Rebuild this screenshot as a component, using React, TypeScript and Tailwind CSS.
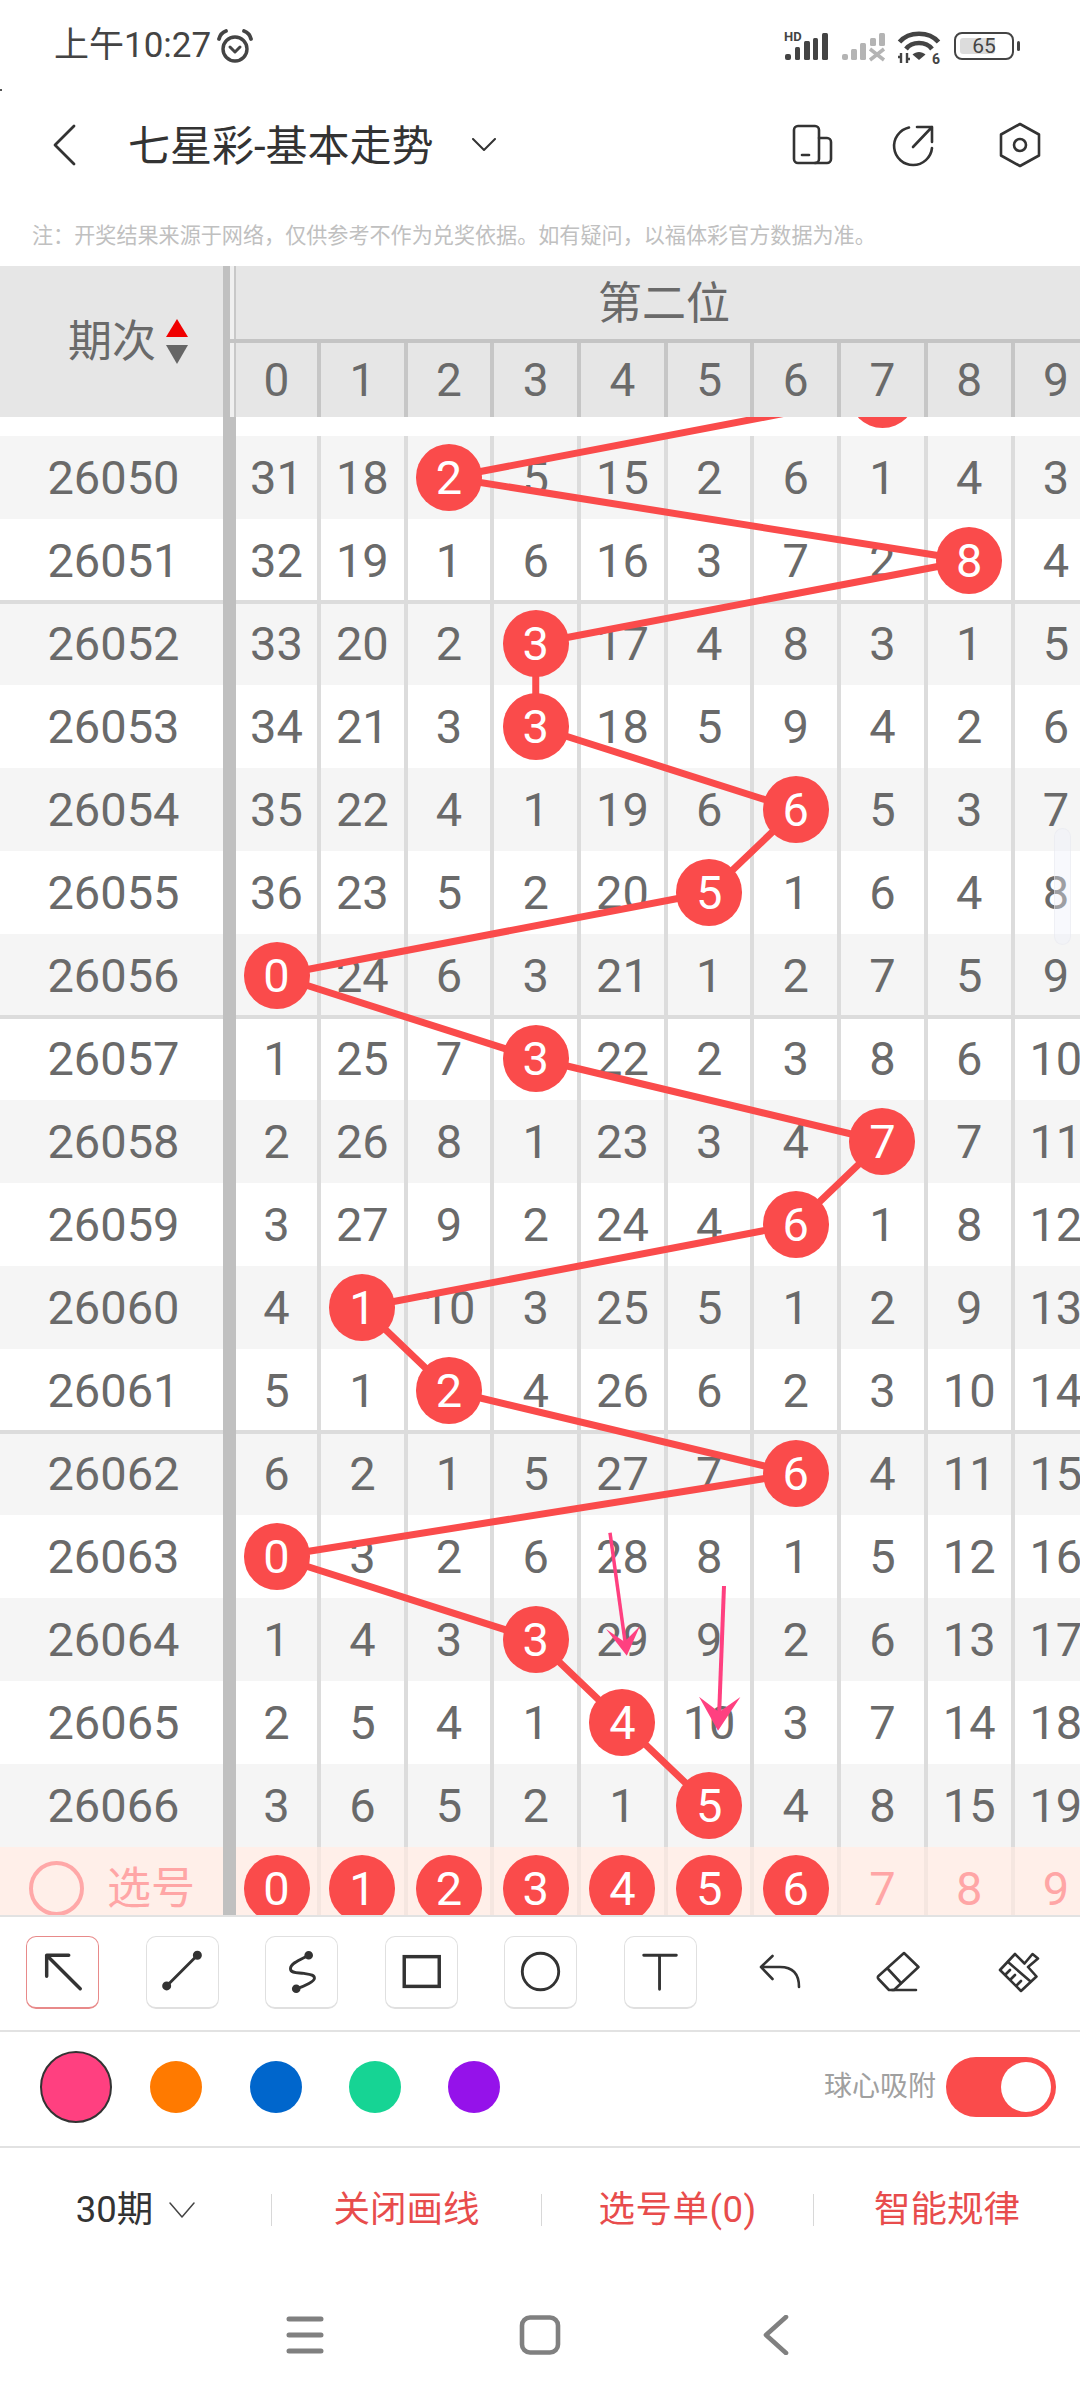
import React from "react";

const rows: { id: number; v: number[]; b: number }[] = [
  { id: 26050, v: [31, 18, 2, 5, 15, 2, 6, 1, 4, 3], b: 2 },
  { id: 26051, v: [32, 19, 1, 6, 16, 3, 7, 2, 8, 4], b: 8 },
  { id: 26052, v: [33, 20, 2, 3, 17, 4, 8, 3, 1, 5], b: 3 },
  { id: 26053, v: [34, 21, 3, 3, 18, 5, 9, 4, 2, 6], b: 3 },
  { id: 26054, v: [35, 22, 4, 1, 19, 6, 6, 5, 3, 7], b: 6 },
  { id: 26055, v: [36, 23, 5, 2, 20, 5, 1, 6, 4, 8], b: 5 },
  { id: 26056, v: [0, 24, 6, 3, 21, 1, 2, 7, 5, 9], b: 0 },
  { id: 26057, v: [1, 25, 7, 3, 22, 2, 3, 8, 6, 10], b: 3 },
  { id: 26058, v: [2, 26, 8, 1, 23, 3, 4, 7, 7, 11], b: 7 },
  { id: 26059, v: [3, 27, 9, 2, 24, 4, 6, 1, 8, 12], b: 6 },
  { id: 26060, v: [4, 1, 10, 3, 25, 5, 1, 2, 9, 13], b: 1 },
  { id: 26061, v: [5, 1, 2, 4, 26, 6, 2, 3, 10, 14], b: 2 },
  { id: 26062, v: [6, 2, 1, 5, 27, 7, 6, 4, 11, 15], b: 6 },
  { id: 26063, v: [0, 3, 2, 6, 28, 8, 1, 5, 12, 16], b: 0 },
  { id: 26064, v: [1, 4, 3, 3, 29, 9, 2, 6, 13, 17], b: 3 },
  { id: 26065, v: [2, 5, 4, 1, 4, 10, 3, 7, 14, 18], b: 4 },
  { id: 26066, v: [3, 6, 5, 2, 1, 5, 4, 8, 15, 19], b: 5 },
];

const colX = (i: number) => (i === 0 ? 276 : 321 + 86.7 * (i - 1) + 41.35);
const rowY = (i: number) => 19 + 83 * i + 41.5;

const cols = [0, 1, 2, 3, 4, 5, 6, 7, 8, 9];

const note =
  "\u6ce8\uff1a\u5f00\u5956\u7ed3\u679c\u6765\u6e90\u4e8e\u7f51\u7edc\uff0c\u4ec5\u4f9b\u53c2\u8003\u4e0d\u4f5c\u4e3a\u5151\u5956\u4f9d\u636e\u3002\u5982\u6709\u7591\u95ee\uff0c\u4ee5\u798f\u4f53\u5f69\u5b98\u65b9\u6570\u636e\u4e3a\u51c6\u3002";

function Ball({ n }: { n: number }) {
  return (
    <div className="relative z-20 flex h-[67px] w-[66px] shrink-0 items-center justify-center rounded-full bg-[#fa4b4b] text-white">
      {n}
    </div>
  );
}

function Cell({ i, border, children }: { i: number; border: string; children: React.ReactNode }) {
  return (
    <div
      className={`flex h-full shrink-0 items-center justify-center border-r-[4px] ${border} ${i === 0 ? "w-[85px]" : "w-[86.7px]"}`}
    >
      {children}
    </div>
  );
}

function ToolBox({ active, children }: { active?: boolean; children: React.ReactNode }) {
  return (
    <div
      className={`h-[73px] w-[73px] shrink-0 rounded-[10px] border border-b-2 ${active ? "border-[#e88a8a]" : "border-[#e0e0e0]"}`}
    >
      <svg viewBox="0 0 73 73" className="h-full w-full" fill="none" stroke="#333" strokeWidth="3" strokeLinecap="round" strokeLinejoin="round">
        {children}
      </svg>
    </div>
  );
}

function ToolPlain({ children }: { children: React.ReactNode }) {
  return (
    <div className="h-[73px] w-[73px] shrink-0">
      <svg viewBox="0 0 73 73" className="h-full w-full" fill="none" stroke="#333" strokeWidth="2.6" strokeLinecap="round" strokeLinejoin="round">
        {children}
      </svg>
    </div>
  );
}

function StatusBar() {
  return (
    <div className="flex h-[92px] items-start pl-[54px] pt-[28px] text-[#444]">
      <div className="text-[35px] leading-[36px]">上午10:27</div>
      <svg viewBox="0 0 36 36" className="ml-[6px] mt-[1px] h-[36px] w-[36px]" fill="none" stroke="#444" strokeLinecap="round" strokeLinejoin="round">
        <circle cx="18" cy="20" r="12" strokeWidth="3.400" />
        <path d="M13 18l5 5 5-5" strokeWidth="3" />
        <path d="M2 10C3 6 6 3 9 2M34 10c-1-4-4-7-7-8" strokeWidth="3.800" />
      </svg>
      <div className="ml-auto mt-[4px] flex items-start pr-[60px]">
        <div className="relative h-[30px] w-[46px]">
          <span className="absolute left-0 top-[-3px] text-[13px] font-bold leading-[16px] text-[#444]">HD</span>
          <svg viewBox="0 0 46 30" className="absolute inset-0 h-full w-full" fill="#444">
            <rect x="1" y="22" width="6" height="6" rx="2" />
            <rect x="11" y="15" width="5" height="13" rx="1.5" />
            <rect x="20" y="9" width="6" height="19" rx="1.5" />
            <rect x="29" y="6" width="5" height="22" rx="1.5" />
            <rect x="38" y="1" width="6" height="27" rx="1.5" />
          </svg>
        </div>
        <svg viewBox="0 0 46 30" className="ml-[11px] h-[30px] w-[46px]" fill="#b4b4b4">
          <rect x="1" y="22" width="6" height="6" rx="2" />
          <rect x="10" y="17" width="6" height="11" rx="1.5" />
          <rect x="19" y="11" width="6" height="17" rx="1.5" />
          <rect x="29" y="6" width="6" height="8" rx="1.5" />
          <rect x="38" y="1" width="6" height="13" rx="1.5" />
          <path d="M29 17l14 11M43 17L29 28" stroke="#b4b4b4" strokeWidth="3.5" fill="none" />
        </svg>
        <svg viewBox="0 0 44 34" className="ml-[10px] mt-[-1px] h-[34px] w-[44px]" fill="none" stroke="#444" strokeLinecap="butt">
          <path d="M2.500 11C12 0 32 0 41.500 11" strokeWidth="4.600" />
          <path d="M9 18C15 10 29 10 35 18" strokeWidth="4.600" />
          <path d="M15.500 23.500C19 20 25 20 28.500 23.500L22 29z" fill="#444" stroke="none" />
          <path d="M4 22v10M10 22v10M1 26h3M10 28h3" strokeWidth="2.400" />
          <text x="35" y="33" fontSize="14" fontWeight="700" fill="#444" stroke="none" fontFamily="Roboto">6</text>
        </svg>
        <div className="relative ml-[13px] h-[28px] w-[66px]">
          <div className="absolute left-0 top-0 h-[28px] w-[60px] rounded-[8px] border-[2.500px] border-[#444]" />
          <div className="absolute left-[6px] top-[6px] h-[16px] w-[35px] rounded-[3px] bg-[#dcdcdc]" />
          <div className="absolute right-0 top-[9px] h-[10px] w-[3px] rounded-[2px] bg-[#444]" />
          <div className="absolute left-0 top-0 flex h-[28px] w-[60px] items-center justify-center text-[21px] leading-none text-[#444]">65</div>
        </div>
      </div>
    </div>
  );
}

function NavBar() {
  return (
    <div className="flex h-[106px] items-center pr-[36px] text-[#333]">
      <svg viewBox="0 0 24 42" className="ml-[52px] h-[42px] w-[24px]" fill="none" stroke="#333" strokeWidth="2.800" strokeLinecap="round" strokeLinejoin="round">
        <path d="M22 2L3 21l19 19" />
      </svg>
      <div className="ml-[52px] mt-[4px] text-[42px] leading-none">七星彩-基本走势</div>
      <svg viewBox="0 0 24 14" className="ml-[38px] h-[14px] w-[24px]" fill="none" stroke="#333" strokeWidth="2" strokeLinecap="round" strokeLinejoin="round">
        <path d="M1 1l11 11L23 1" />
      </svg>
      <div className="ml-auto flex items-center">
        <svg viewBox="0 0 48 48" className="h-[48px] w-[48px]" fill="none" stroke="#333" strokeWidth="2.600" strokeLinecap="round" strokeLinejoin="round">
          <path d="M27 42H10a4 4 0 0 1-4-4V9a4 4 0 0 1 4-4h17a4 4 0 0 1 4 4v29a4 4 0 0 1-4 4z" />
          <path d="M31 17h8a4 4 0 0 1 4 4v17a4 4 0 0 1-4 4H27" />
          <path d="M14 34h7" />
        </svg>
        <svg viewBox="0 0 48 48" className="ml-[53px] h-[48px] w-[48px]" fill="none" stroke="#333" strokeWidth="2.600" strokeLinecap="round" strokeLinejoin="round">
          <path d="M20 6.500A19 19 0 1 0 43 27" />
          <path d="M24 26L43 6M28 6h15v15" />
        </svg>
        <svg viewBox="0 0 48 48" className="ml-[59px] h-[48px] w-[48px]" fill="none" stroke="#333" strokeWidth="2.600" strokeLinecap="round" strokeLinejoin="round">
          <path d="M24 3l19 10.500v21L24 45 5 34.500v-21z" />
          <circle cx="24" cy="24" r="6" />
        </svg>
      </div>
    </div>
  );
}

function TableHeader() {
  return (
    <div className="flex h-[151px] bg-[#e6e6e6] text-[#6a6a6a]">
      <div className="flex w-[223px] shrink-0 items-center justify-center pl-[33px] text-[44px] leading-none">
        <span>期次</span>
        <div className="ml-[10px] flex flex-col gap-[8px]">
          <svg viewBox="0 0 22 18" className="h-[18px] w-[22px]"><path d="M11 0l11 18H0z" fill="#f00000" /></svg>
          <svg viewBox="0 0 22 19" className="h-[19px] w-[22px]"><path d="M0 0h22L11 19z" fill="#666" /></svg>
        </div>
      </div>
      <div className="w-[7px] shrink-0 bg-[#c0c0c0]" />
      <div className="w-[4px] shrink-0 bg-[#f0f0f0]" />
      <div className="w-[2px] shrink-0 bg-[#c8c8c8]" />
      <div className="flex w-[870px] shrink-0 flex-col">
        <div className="ml-[-6px] flex h-[77px] items-center justify-center border-b-[4px] border-[#c4c4c4] pr-[8px] pt-[3px] text-[44px] leading-none">第二位</div>
        <div className="flex h-[74px] text-[46px] leading-none">
          {cols.map((c) => (
            <Cell key={c} i={c} border="border-[#c6c6c6]">{c}</Cell>
          ))}
        </div>
      </div>
    </div>
  );
}

function Lines() {
  const pts = [{ x: colX(7), y: rowY(-1) }, ...rows.map((r, i) => ({ x: colX(r.b), y: rowY(i) }))];
  return (
    <svg className="absolute left-0 top-0 z-10 h-[1498px] w-[1080px]" viewBox="0 0 1080 1498" fill="none">
      <polyline points={pts.map((p) => `${p.x},${p.y}`).join(" ")} stroke="#fa4b4b" strokeWidth="7" strokeLinejoin="round" />
      <circle cx={colX(7)} cy={rowY(-1)} r="33.500" fill="#fa4b4b" />
      <path d="M610 1115.700L625.500 1228" stroke="#ff4080" strokeWidth="3.500" />
      <path d="M626.800 1238.700L606 1212 624.400 1224.700 640 1209z" fill="#ff4080" />
      <path d="M724 1169L719 1300" stroke="#ff4080" strokeWidth="4" />
      <path d="M718 1313.700L699 1279.700 719 1295 740.400 1280z" fill="#ff4080" />
    </svg>
  );
}

function TableBody() {
  return (
    <div className="relative h-[1498px] overflow-hidden text-[#6a6a6a]">
      <div className="h-[19px]" />
      {rows.map((r, i) => (
        <div
          key={r.id}
          className={`flex h-[83px] text-[47px] leading-none ${i % 2 === 0 ? "bg-[#f5f5f5]" : "bg-white"} ${i % 5 === 1 && i < 16 ? "shadow-[inset_0_-2px_0_#dcdcdc]" : ""} ${i % 5 === 2 ? "shadow-[inset_0_2px_0_#dcdcdc]" : ""}`}
        >
          <div className="flex w-[236px] shrink-0 items-center justify-center pr-[9px]">{r.id}</div>
          {r.v.map((n, c) => (
            <Cell key={c} i={c} border="border-[#dcdcdc]">
              {c === r.b ? <Ball n={n} /> : n}
            </Cell>
          ))}
        </div>
      ))}
      <div className="flex h-[83px] bg-[#ffefe9] text-[47px] leading-none text-[#ffa6a6]">
        <div className="flex w-[236px] shrink-0 items-center pl-[29px]">
          <div className="h-[55px] w-[55px] rounded-full border-[4px] border-[#ffa8a8]" />
          <span className="ml-[23px] text-[44px]">选号</span>
        </div>
        {cols.map((c) => (
          <Cell key={c} i={c} border="border-[#f5e6e0]">
            {c < 7 ? <Ball n={c} /> : c}
          </Cell>
        ))}
      </div>
      <div className="absolute bottom-0 left-[223px] top-0 z-[5] w-[13px] bg-[#c0c0c0]" />
      <Lines />
    </div>
  );
}

function Tools() {
  return (
    <div className="flex h-[117px] gap-[46.600px] border-y-2 border-[#e2e2e2] pl-[26px] pt-[19px]">
      <ToolBox active>
        <path d="M43 19H20v22M20 19l35 35" strokeWidth="3.600" />
      </ToolBox>
      <ToolBox>
        <path d="M52 19L20 51" />
        <circle cx="52" cy="19" r="3.200" fill="#333" />
        <circle cx="20" cy="51" r="3.200" fill="#333" />
      </ToolBox>
      <ToolBox>
        <path d="M44 19C37 23 25 27 25 33c0 5 8 4 14 5 6 1 11 1 11 5 0 3-9 8-19 11" />
        <circle cx="44" cy="19" r="3" fill="#333" />
        <circle cx="31" cy="54" r="3" fill="#333" />
      </ToolBox>
      <ToolBox>
        <rect x="18.500" y="20.500" width="36.500" height="31" strokeWidth="3.600" strokeLinejoin="miter" />
      </ToolBox>
      <ToolBox>
        <circle cx="36.500" cy="36" r="19" />
      </ToolBox>
      <ToolBox>
        <path d="M19 19h34M35.500 19v35.500" />
      </ToolBox>
      <ToolPlain>
        <path d="M28.500 20L17 31l11.500 12M17 31h19c11 0 19 5 19 20" />
      </ToolPlain>
      <ToolPlain>
        <path d="M41 17l14.500 14L31 54h-5L15.500 43a2 2 0 0 1 0-3z" />
        <path d="M25 33l13 14M29 54h24" />
      </ToolPlain>
      <ToolPlain>
        <path d="M17 34L32 18l9.500 9.500L49.500 18 55 22.500 45 31l8.500 9.500L38 55z" />
        <path d="M25 26l22 19M23 38l4-4M28 43l4-4M34 49l4-4" />
      </ToolPlain>
    </div>
  );
}

function Colors() {
  return (
    <div className="flex h-[116px] items-center border-b-2 border-[#e2e2e2] pb-[4px] pl-[40px] pr-[24px]">
      <div className="h-[72px] w-[72px] rounded-full border-2 border-[#333] bg-[#ff4080]" />
      <div className="ml-[38px] h-[52px] w-[52px] rounded-full bg-[#ff7a00]" />
      <div className="ml-[48px] h-[52px] w-[52px] rounded-full bg-[#0066cc]" />
      <div className="ml-[47px] h-[52px] w-[52px] rounded-full bg-[#16d494]" />
      <div className="ml-[47px] h-[52px] w-[52px] rounded-full bg-[#9512ea]" />
      <span className="ml-auto text-[28px] leading-none text-[#a0a0a0]">球心吸附</span>
      <div className="ml-[10px] flex h-[60px] w-[110px] items-center justify-end rounded-full bg-[#fa4b4b] pr-[5px]">
        <div className="h-[50px] w-[50px] rounded-full bg-white" />
      </div>
    </div>
  );
}

function Actions() {
  return (
    <div className="grid h-[124px] grid-cols-[272px_270px_272px_1fr] items-center text-[36.500px] leading-none">
      <div className="flex h-[32px] items-center justify-center border-r border-[#d8d8d8] text-[#333]">
        <span>30期</span>
        <svg viewBox="0 0 26 16" className="ml-[16px] h-[16px] w-[26px]" fill="none" stroke="#444" strokeWidth="1.500" strokeLinecap="round" strokeLinejoin="round">
          <path d="M1 1l12 14L25 1" />
        </svg>
      </div>
      <div className="flex h-[32px] items-center justify-center border-r border-[#d8d8d8] text-[#e84c4c]">关闭画线</div>
      <div className="flex h-[32px] items-center justify-center border-r border-[#d8d8d8] tracking-[0.5px] text-[#e84c4c]">选号单(0)</div>
      <div className="flex h-[32px] items-center justify-center text-[#e84c4c]">智能规律</div>
    </div>
  );
}

function SystemNav() {
  return (
    <div className="flex h-[126px] items-center justify-center gap-[175px]">
      <svg viewBox="0 0 60 40" className="h-[40px] w-[60px]" fill="none" stroke="#808080" strokeWidth="5" strokeLinecap="round">
        <path d="M14 4h32M14 20h32M14 36h32" />
      </svg>
      <svg viewBox="0 0 60 40" className="h-[40px] w-[60px]" fill="none" stroke="#808080" strokeWidth="4.600">
        <rect x="12" y="2.500" width="36" height="35" rx="8" />
      </svg>
      <svg viewBox="0 0 60 40" className="h-[40px] w-[60px]" fill="none" stroke="#808080" strokeWidth="4.600" strokeLinecap="round" strokeLinejoin="round">
        <path d="M41 2L21 20l20 18" />
      </svg>
    </div>
  );
}

export default function App() {
  return (
    <div className="relative h-[2400px] w-[1080px] overflow-hidden bg-white font-['Roboto','Noto_Sans_CJK_SC',sans-serif]">
      <StatusBar />
      <NavBar />
      <div className="h-[68px] whitespace-nowrap pl-[32px] pt-[26px] text-[21.100px] leading-[24px] text-[#c0c0c0]">{note}</div>
      <TableHeader />
      <TableBody />
      <Tools />
      <Colors />
      <Actions />
      <SystemNav />
      <div className="absolute left-[1054px] top-[828px] z-30 h-[117px] w-[17px] rounded-full border border-[#e8e8ee]/50 bg-[#eef0fb]/40" />
      <div className="absolute left-0 top-[89px] h-[2px] w-[2px] bg-[#555]" />
    </div>
  );
}
